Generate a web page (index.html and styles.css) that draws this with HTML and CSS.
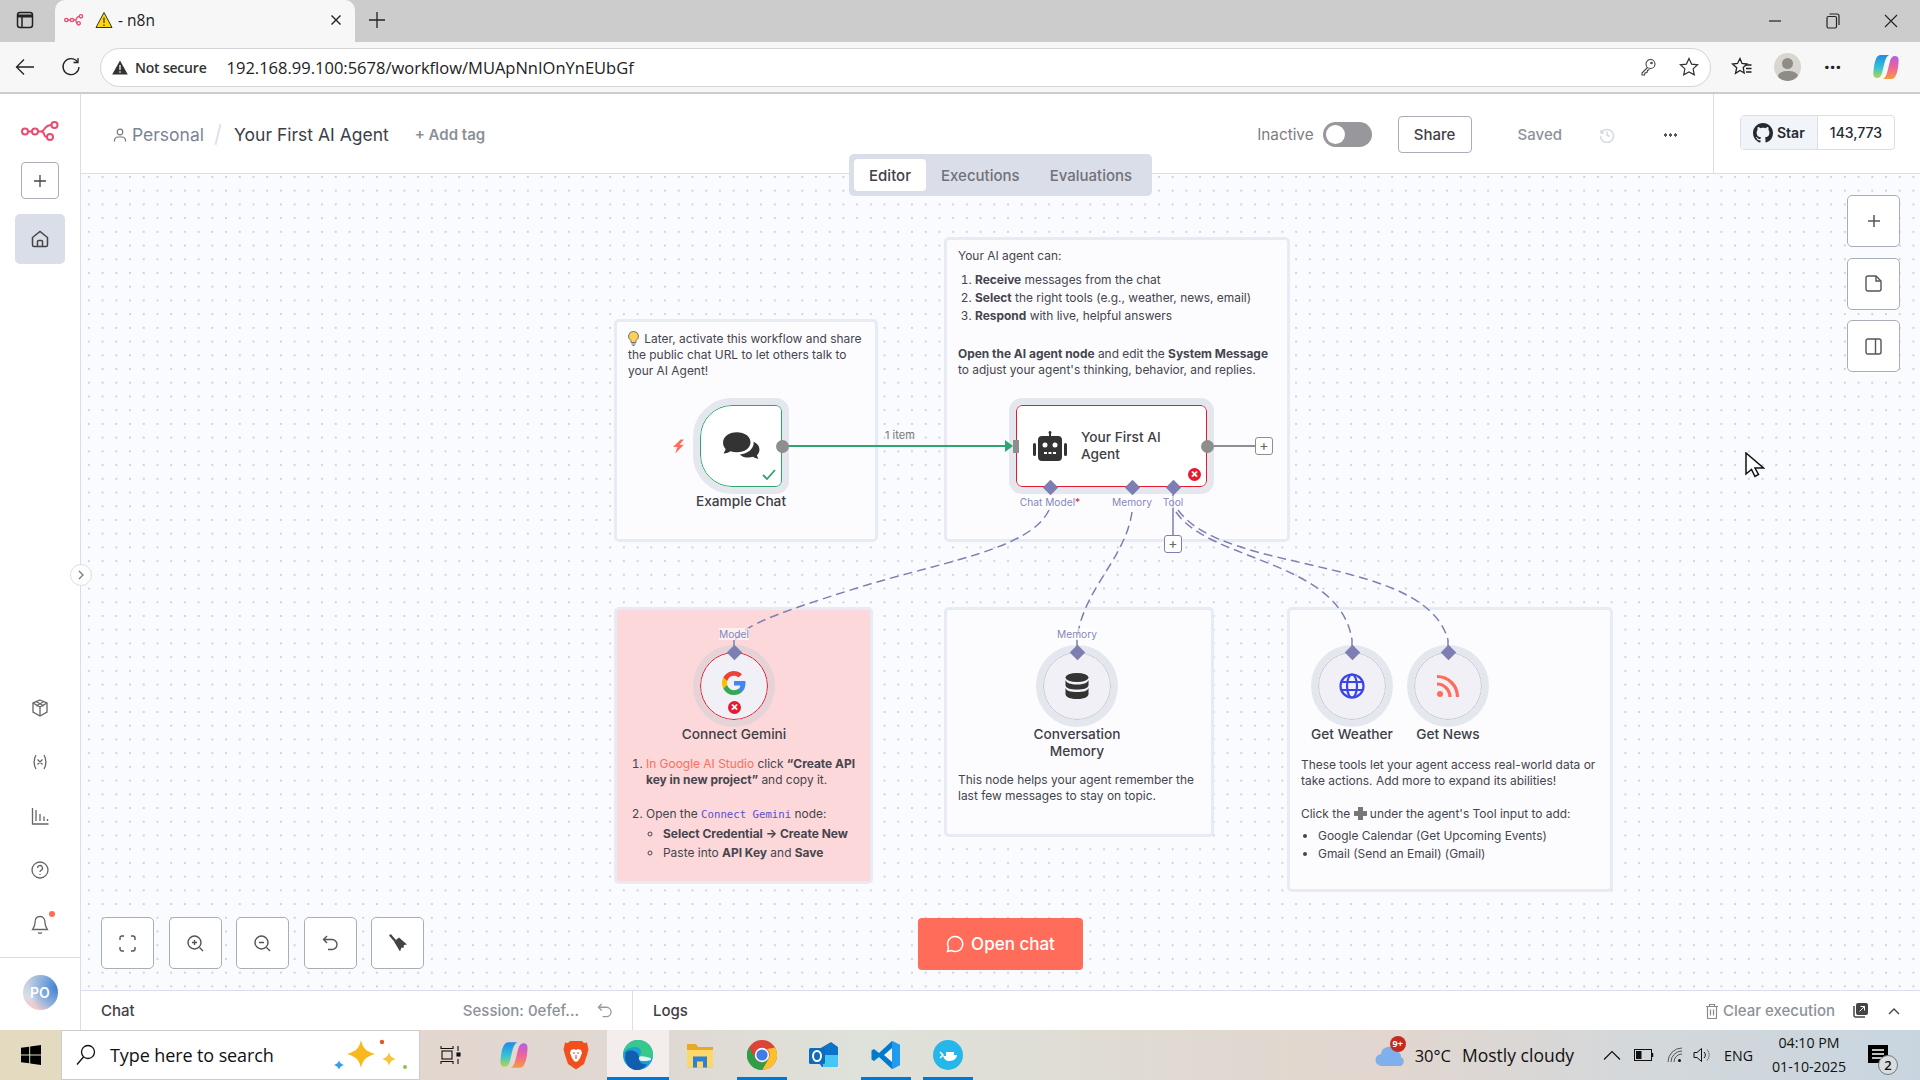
FILE: index.html
```html
<!DOCTYPE html>
<html lang="en">

<head>
    <meta charset="UTF-8">
    <meta name="viewport" content="width=device-width, initial-scale=1.0">
    <title>- n8n</title>
    <link rel="stylesheet" href="styles.css">
</head>

<body>
    <!-- Browser tab strip -->
    <div class="tabstrip">
        <div class="tab-side">
            <svg width="20" height="20" viewBox="0 0 20 20" fill="none" stroke="#222" stroke-width="1.5"><rect x="2.5" y="2.5" width="15" height="15" rx="2.5"/><path d="M2.5 6h15" stroke-width="3"/><path d="M7 7v10"/></svg>
        </div>
        <div class="tab">
            <svg class="tab-logo" width="20" height="12" viewBox="0 0 30 18" fill="none" stroke="#ea4b71" stroke-width="2"><circle cx="3.5" cy="9" r="2.5"/><circle cx="12" cy="9" r="2.5"/><circle cx="25.5" cy="3.5" r="2.5"/><circle cx="22" cy="14" r="2.5"/><path d="M6 9h3.5M14.5 9h2c3 0 2-5.5 6-5.5M16.5 9c3 0 1 5 3 5"/></svg>
            <svg width="18" height="18" viewBox="0 0 18 18"><path d="M9 1.5 17 16.5H1z" fill="#ffd60a" stroke="#333" stroke-width="1"/><path d="M9 6.5v5.5M9 13.5v1.5" stroke="#333" stroke-width="1.2"/></svg>
            <span class="tab-title">- n8n</span>
            <svg class="tab-close" width="12" height="12" viewBox="0 0 12 12" stroke="#222" stroke-width="1.4"><path d="M1.5 1.5l9 9M10.5 1.5l-9 9"/></svg>
        </div>
        <svg class="tab-new" width="18" height="18" viewBox="0 0 18 18" stroke="#222" stroke-width="1.3"><path d="M9 1v16M1 9h16"/></svg>
        <div class="window-btns">
            <svg width="14" height="14" viewBox="0 0 14 14" stroke="#222" stroke-width="1.2"><path d="M1 7h12"/></svg>
            <svg width="14" height="16" viewBox="0 0 14 16" fill="none" stroke="#222" stroke-width="1.2"><rect x="1" y="3.5" width="9.5" height="11.5" rx="1.5"/><path d="M3.5 1h7.5a2 2 0 0 1 2 2v9"/></svg>
            <svg width="14" height="14" viewBox="0 0 14 14" stroke="#222" stroke-width="1.1"><path d="M1 1l12 12M13 1L1 13"/></svg>
        </div>
    </div>

    <!-- Browser toolbar -->
    <div class="toolbar">
        <svg class="tool-back" width="20" height="18" viewBox="0 0 20 18" fill="none" stroke="#222" stroke-width="1.3"><path d="M19 9H1.5M9 1.5 1.5 9 9 16.5"/></svg>
        <svg class="tool-reload" width="20" height="20" viewBox="0 0 20 20" fill="none" stroke="#222" stroke-width="1.3"><path d="M16.5 5A8 8 0 1 0 18 10"/><path d="M17 1v4.5h-4.5"/></svg>
        <div class="urlbar">
            <svg width="16" height="15" viewBox="0 0 16 15"><path d="M8 .5 15.8 14.5H.2z" fill="#333"/><path d="M8 5v5M8 11.2v1.5" stroke="#fff" stroke-width="1.3"/></svg>
            <span class="not-secure">Not secure</span>
            <span class="url">192.168.99.100:5678/workflow/MUApNnIOnYnEUbGf</span>
            <svg class="url-key" width="18" height="18" viewBox="0 0 18 18" fill="none" stroke="#444" stroke-width="1.1"><circle cx="11.5" cy="6" r="4.5"/><path d="M8.5 9.5 3 15v2h2.5l.5-2 2-.5.5-2 2-1"/><circle cx="12.5" cy="5" r=".8"/></svg>
            <svg class="url-star" width="20" height="20" viewBox="0 0 20 20" fill="none" stroke="#333" stroke-width="1.2"><path d="M10 1.5l2.6 5.6 6 .7-4.5 4.1 1.2 6L10 15l-5.3 2.9 1.2-6L1.4 7.8l6-.7z"/></svg>
        </div>
        <div class="tool-right">
            <svg width="22" height="20" viewBox="0 0 22 20" fill="none" stroke="#222" stroke-width="1.3"><path d="M9 1.5l2 5 5 .5-3.8 3.5 1 5.5L9 13.5l-4.5 2.8 1.2-5.5L1.5 7l5-.5z"/><path d="M14.5 8h6M15 11.5h5.5M15 15h5.5"/></svg>
            <div class="profile"><span class="profile-head"></span><span class="profile-body"></span></div>
            <span class="tool-dots">···</span>
            <svg width="28" height="28" viewBox="0 0 28 28" fill="none">
                <defs>
                    <linearGradient id="copilotA" x1="0" y1="0" x2="0" y2="1"><stop offset="0" stop-color="#1f8be8"/><stop offset=".55" stop-color="#35c3d8"/><stop offset="1" stop-color="#b4d64a"/></linearGradient>
                    <linearGradient id="copilotB" x1="0" y1="0" x2="0" y2="1"><stop offset="0" stop-color="#b45fe0"/><stop offset=".5" stop-color="#f0649a"/><stop offset="1" stop-color="#f79a3e"/></linearGradient>
                </defs>
                <path d="M9 2h8c-2 1-3 3-4 6l-3 12c-.7 3-2.5 5-5 5-3.5 0-4-3-3.5-7 .5-5 1-9 2.5-12C5 3.5 6.5 2 9 2z" fill="url(#copilotA)"/>
                <path d="M19 26h-8c2-1 3-3 4-6l3-12c.7-3 2.5-5 5-5 3.5 0 4 3 3.5 7-.5 5-1 9-2.5 12-1 2.5-2.5 4-5 4z" fill="url(#copilotB)"/>
            </svg>
        </div>
    </div>

    <div class="app">
        <!-- n8n side menu -->
        <aside class="sidebar">
            <svg class="side-logo" width="38" height="20" viewBox="0 0 38 20" fill="none" stroke="#ea4b71" stroke-width="2"><circle cx="4" cy="10.5" r="3"/><circle cx="14" cy="10.5" r="3"/><circle cx="33.5" cy="4" r="3"/><circle cx="29" cy="16" r="3"/><path d="M7 10.5h4M17 10.5h3c4 0 3-6.5 10.500-6.500M20 10.500c5 0 1.500 5.500 6 5.500"/></svg>
            <div class="side-add"><svg width="14" height="14" viewBox="0 0 14 14" stroke="#444" stroke-width="1.3"><path d="M7 1v12M1 7h12"/></svg></div>
            <div class="side-home"><svg width="18" height="18" viewBox="0 0 18 18" fill="none" stroke="#444" stroke-width="1.5"><path d="M1.5 7.5 9 1.5l7.5 6v7.5a1.5 1.5 0 0 1-1.5 1.5H3A1.5 1.5 0 0 1 1.5 15z"/><path d="M6.5 16.5v-5a1 1 0 0 1 1-1h3a1 1 0 0 1 1 1v5"/></svg></div>
            <div class="side-icons">
                <svg width="18" height="18" viewBox="0 0 18 18" fill="none" stroke="#666" stroke-width="1.3"><path d="M9 1l7 3v9l-7 4-7-4V4z"/><path d="M2 4l7 4 7-4M9 8v9M5 2.5l8 4.5M13 2.5 5 7"/></svg>
                <svg width="18" height="18" viewBox="0 0 18 18" fill="none" stroke="#666" stroke-width="1.3"><path d="M5 2C2.5 6 2.5 12 5 16M13 2c2.500 4 2.500 10 0 14M6.5 6.5l5 5M11.5 6.5l-5 5"/></svg>
                <svg width="18" height="18" viewBox="0 0 18 18" fill="none" stroke="#666" stroke-width="1.3"><path d="M1.5 1v16h16M5 14V3M9 14V7M13 14v-4.5M16.5 14v-2"/></svg>
                <svg width="18" height="18" viewBox="0 0 18 18" fill="none" stroke="#666" stroke-width="1.3"><circle cx="9" cy="9" r="8"/><path d="M6.5 7a2.5 2.5 0 1 1 3.5 2.300c-.7.4-1 .8-1 1.700M9 13v1"/></svg>
                <div class="side-bell"><svg width="18" height="20" viewBox="0 0 18 20" fill="none" stroke="#666" stroke-width="1.3"><path d="M9 1.5c-3.5 0-5 3-5 6 0 4-2 6-2.500 7h15C16 13.500 14 11.500 14 7.500c0-3-1.500-6-5-6zM7 17.500c.5 1 3.500 1 4 0"/></svg><span class="bell-dot"></span></div>
            </div>
            <div class="side-user"><span class="avatar">PO</span></div>
        </aside>

        <main class="main">
            <header class="topbar">
                <svg width="14" height="14" viewBox="0 0 14 14" fill="none" stroke="#777" stroke-width="1.2"><circle cx="7" cy="4" r="2.8"/><path d="M1.5 13.5V12A3.500 3.500 0 0 1 5 9h4a3.500 3.500 0 0 1 3.500 3v1.500"/></svg>
                <span class="crumb">Personal</span>
                <span class="crumb-sep"></span>
                <span class="wf-name">Your First AI Agent</span>
                <span class="add-tag">+ Add tag</span>
                <span class="inactive">Inactive</span>
                <span class="toggle"><span class="knob"></span></span>
                <span class="share">Share</span>
                <span class="saved">Saved</span>
                <svg class="history" width="16" height="16" viewBox="0 0 16 16" fill="none" stroke="#d5dae3" stroke-width="1.5"><path d="M2 3v3h3M2.2 6A6.500 6.500 0 1 1 1.500 9M8 4.500V8l2.500 1.500"/></svg>
                <span class="more"></span>
                <span class="top-div"></span>
                <div class="github">
                    <span class="gh-star"><svg width="20" height="20" viewBox="0 0 16 16" fill="#24292f"><path d="M8 0C3.58 0 0 3.58 0 8c0 3.54 2.29 6.53 5.47 7.59.4.07.55-.17.55-.38 0-.19-.01-.82-.01-1.49-2.01.37-2.53-.49-2.69-.94-.09-.23-.48-.94-.82-1.13-.28-.15-.68-.52-.01-.53.63-.01 1.08.58 1.23.82.72 1.21 1.87.87 2.33.66.07-.52.28-.87.51-1.07-1.78-.2-3.64-.89-3.64-3.95 0-.87.31-1.59.82-2.15-.08-.2-.36-1.02.08-2.12 0 0 .67-.21 2.2.82.64-.18 1.32-.27 2-.27s1.36.09 2 .27c1.53-1.04 2.2-.82 2.2-.82.44 1.1.16 1.92.08 2.12.51.56.82 1.27.82 2.15 0 3.07-1.87 3.75-3.65 3.95.29.25.54.73.54 1.48 0 1.07-.01 1.93-.01 2.2 0 .21.15.46.55.38A8.01 8.01 0 0 0 16 8c0-4.42-3.58-8-8-8z"/></svg>Star</span>
                    <span class="gh-count">143,773</span>
                </div>
            </header>

            <section class="canvas">
                <div class="tabs">
                    <span class="tabs-item tabs-active">Editor</span>
                    <span class="tabs-item">Executions</span>
                    <span class="tabs-item tabs-last">Evaluations</span>
                </div>

                <!-- Sticky notes: place on the canvas is the content -->
                <div class="note note-chat">
                    <p><svg class="bulb" width="11" height="15" viewBox="0 0 11 15"><path d="M5.5.5A4.8 4.8 0 0 0 3 9.5v2h5v-2A4.8 4.8 0 0 0 5.5.5z" fill="#ffcf5c" stroke="#555" stroke-width=".8"/><path d="M3.5 13h4M4.5 14.5h2" stroke="#666"/></svg> Later, activate this workflow and share the public chat URL to let others talk to your AI Agent!</p>
                </div>
                <div class="note note-agent">
                    <p>Your AI agent can:</p>
                    <ol class="agent-list">
                        <li><b>Receive</b> messages from the chat</li>
                        <li><b>Select</b> the right tools (e.g., weather, news, email)</li>
                        <li><b>Respond</b> with live, helpful answers</li>
                    </ol>
                    <p class="agent-open"><b>Open the AI agent node</b> and edit the <b>System Message</b> to adjust your agent's thinking, behavior, and replies.</p>
                </div>
                <div class="note note-gemini">
                    <ol class="gemini-list">
                        <li><span class="link-red">In Google AI Studio</span> click <b>“Create API</b><br><b>key in new project”</b> and copy it.</li>
                        <li class="gemini-second">Open the <code>Connect Gemini</code> node:
                            <ul>
                                <li><b>Select Credential → Create New</b></li>
                                <li>Paste into <b>API Key</b> and <b>Save</b></li>
                            </ul>
                        </li>
                    </ol>
                </div>
                <div class="note note-memory">
                    <p>This node helps your agent remember the last few messages to stay on topic.</p>
                </div>
                <div class="note note-tools">
                    <p>These tools let your agent access real-world data or take actions. Add more to expand its abilities!</p>
                    <p class="tools-click">Click the <span class="plus-emoji"></span> under the agent's Tool input to add:</p>
                    <ul class="tools-list">
                        <li>Google Calendar (Get Upcoming Events)</li>
                        <li>Gmail (Send an Email) (Gmail)</li>
                    </ul>
                </div>

                <!-- Connections, viewBox is page coordinates -->
                <svg class="edges" viewBox="80 174 1840 816" width="1840" height="816" fill="none">
                    <path d="M788 446H1006" stroke="#2da56d" stroke-width="2"/>
                    <path d="M1005 440l8 6-8 6z" fill="#2da56d"/>
                    <path d="M1214 446h41" stroke="#8e8e8e" stroke-width="2"/>
                    <path d="M1173 490v45" stroke="#7d7fb3" stroke-width="1.5"/>
                    <g stroke="#7d7fb3" stroke-width="1.5" stroke-dasharray="9 5">
                        <path d="M1049 510C1030 550 940 562 857 588S745 625 735 640"/>
                        <path d="M1132 512C1125 560 1082 590 1077 640"/>
                        <path d="M1176 512C1210 562 1340 560 1352 640"/>
                        <path d="M1178 510C1225 575 1425 555 1448 640"/>
                    </g>
                    <path d="M734 640v12M1077 640v12M1352 640v12M1448 640v12" stroke="#7d7fb3" stroke-width="1.5"/>
                </svg>

                <!-- Nodes -->
                <span class="edge-label">1 item</span>

                <div class="node-chat">
                    <svg width="38" height="30" viewBox="0 0 36 28"><path d="M14 1C6.5 1 1 5 1 11c0 2.5 1 4.5 2.5 6L1.5 21c3 0 5-1 6.5-2 2 .7 4 1 6 1 7.5 0 13-4 13-9.5S21.500 1 14 1z" fill="#333"/><path d="M30 10c.5 7-6 11.5-13 12 2 2 5 3 8 3 1.5 0 3-.2 4.5-.7 1 .8 3 1.7 5 1.7l-1.5-3c1.5-1.5 2.5-3.5 2.5-5.5 0-3.5-2-6-5.500-7.500z" fill="#333"/></svg>
                    <svg class="chat-check" width="14" height="12" viewBox="0 0 14 12" fill="none" stroke="#2da56d" stroke-width="1.8"><path d="M1 6l4 4 8-9"/></svg>
                </div>
                <svg class="bolt" width="12" height="15" viewBox="0 0 11 13"><path d="M7 0 0 7h4l-2 6 8-8H6l4-5z" fill="#ff6d5a"/></svg>
                <span class="port-out port-chat"></span>
                <span class="node-title title-chat">Example Chat</span>

                <div class="node-agent">
                    <svg width="36" height="30" viewBox="0 0 36 30"><path d="M18 0a1.5 1.5 0 0 1 1 2.6V5h7a4 4 0 0 1 4 4v17a4 4 0 0 1-4 4H10a4 4 0 0 1-4-4V9a4 4 0 0 1 4-4h7V2.6A1.5 1.5 0 0 1 18 0z" fill="#333"/><rect x="1" y="12" width="3" height="13" rx="1.5" fill="#333"/><rect x="32" y="12" width="3" height="13" rx="1.5" fill="#333"/><circle cx="13" cy="14" r="2.5" fill="#fff"/><circle cx="23" cy="14" r="2.5" fill="#fff"/><path d="M12 22h3M16.5 22h3M21 22h3" stroke="#fff" stroke-width="1.8"/></svg>
                    <span class="agent-name">Your First AI Agent</span>
                    <span class="err-badge err-agent">×</span>
                </div>
                <span class="port-in"></span>
                <span class="port-out port-agent"></span>
                <span class="plus-box plus-out">+</span>
                <span class="plus-box plus-tool">+</span>
                <span class="diamond d-model"></span>
                <span class="diamond d-mem"></span>
                <span class="diamond d-tool"></span>
                <span class="port-label pl-model">Chat Model<i>*</i></span>
                <span class="port-label pl-mem">Memory</span>
                <span class="port-label pl-tool">Tool</span>

                <div class="node-round n-gemini">
                    <svg width="24" height="24" viewBox="0 0 24 24"><path d="M23.5 12.3c0-.8-.1-1.600-.2-2.300H12v4.500h6.500a5.500 5.500 0 0 1-2.400 3.600v3h3.900c2.200-2.100 3.500-5.200 3.500-8.800z" fill="#4285f4"/><path d="M12 24c3.2 0 6-1.100 8-2.900l-3.900-3c-1.100.7-2.500 1.200-4.100 1.200-3.100 0-5.800-2.100-6.700-5H1.300v3.100A12 12 0 0 0 12 24z" fill="#34a853"/><path d="M5.300 14.300a7.200 7.200 0 0 1 0-4.600V6.600h-4a12 12 0 0 0 0 10.800z" fill="#fbbc05"/><path d="M12 4.800c1.800 0 3.300.6 4.600 1.800l3.400-3.400A12 12 0 0 0 1.300 6.600l4 3.100c1-2.900 3.600-4.900 6.700-4.900z" fill="#ea4335"/></svg>
                    <span class="err-badge err-gemini">×</span>
                </div>
                <div class="node-round n-memory">
                    <svg width="24" height="26" viewBox="0 0 24 26" fill="#333"><ellipse cx="12" cy="4.5" rx="11.5" ry="4.5"/><path d="M.5 7c1 3 5 4.5 11.5 4.5S22.5 10 23.5 7v5.5c-1 3-5 4-11.5 4S1.5 15.5.5 12.5z"/><path d="M.5 15c1 3 5 4 11.5 4s10.5-1 11.5-4v6.5C22.5 24.5 18.5 26 12 26S1.5 24.5.5 21.5z"/></svg>
                </div>
                <div class="node-round n-weather">
                    <svg width="26" height="26" viewBox="0 0 26 26" fill="none" stroke="#3a45e8" stroke-width="2.2"><circle cx="13" cy="13" r="11.5"/><ellipse cx="13" cy="13" rx="5" ry="11.5"/><path d="M2.5 9h21M2.5 17h21"/></svg>
                </div>
                <div class="node-round n-news">
                    <svg width="24" height="24" viewBox="0 0 24 24" fill="none" stroke="#ff6d5a" stroke-width="3.2"><circle cx="4" cy="20" r="3" fill="#ff6d5a" stroke="none"/><path d="M1 10a13 13 0 0 1 13 13M1 2.5A20.5 20.5 0 0 1 21.5 23"/></svg>
                </div>
                <span class="diamond d-gem"></span>
                <span class="diamond d-cmem"></span>
                <span class="diamond d-weather"></span>
                <span class="diamond d-news"></span>
                <span class="port-label pl-gem">Model</span>
                <span class="port-label pl-cmem">Memory</span>
                <span class="node-title title-gem">Connect Gemini</span>
                <span class="node-title title-cmem">Conversation Memory</span>
                <span class="node-title title-weather">Get Weather</span>
                <span class="node-title title-news">Get News</span>

                <span class="collapse"><svg width="8" height="10" viewBox="0 0 8 10" fill="none" stroke="#777" stroke-width="1.3"><path d="M2 1l4 4-4 4"/></svg></span>

                <!-- Floating canvas controls -->
                <div class="ctrl-right">
                    <span class="ctrl"><svg width="14" height="14" viewBox="0 0 14 14" stroke="#555" stroke-width="1.5"><path d="M7 1v12M1 7h12"/></svg></span>
                    <span class="ctrl"><svg width="17" height="17" viewBox="0 0 17 17" fill="none" stroke="#555" stroke-width="1.4"><path d="M3 1h8l5 5v8a2 2 0 0 1-2 2H3a2 2 0 0 1-2-2V3a2 2 0 0 1 2-2z"/><path d="M11 1v5h5"/></svg></span>
                    <span class="ctrl"><svg width="17" height="17" viewBox="0 0 17 17" fill="none" stroke="#555" stroke-width="1.4"><rect x="1" y="1" width="15" height="15" rx="2"/><path d="M10.5 1v15"/></svg></span>
                </div>
                <div class="ctrl-left">
                    <span class="ctrl"><svg width="17" height="17" viewBox="0 0 17 17" fill="none" stroke="#555" stroke-width="1.4"><path d="M1 5V3a2 2 0 0 1 2-2h2M12 1h2a2 2 0 0 1 2 2v2M16 12v2a2 2 0 0 1-2 2h-2M5 16H3a2 2 0 0 1-2-2v-2"/></svg></span>
                    <span class="ctrl"><svg width="17" height="17" viewBox="0 0 17 17" fill="none" stroke="#555" stroke-width="1.4"><circle cx="7.5" cy="7.5" r="6.5"/><path d="M12.5 12.5 16 16M7.5 5v5M5 7.5h5"/></svg></span>
                    <span class="ctrl"><svg width="17" height="17" viewBox="0 0 17 17" fill="none" stroke="#555" stroke-width="1.4"><circle cx="7.5" cy="7.5" r="6.5"/><path d="M12.5 12.5 16 16M5 7.5h5"/></svg></span>
                    <span class="ctrl"><svg width="16" height="16" viewBox="0 0 16 16" fill="none" stroke="#555" stroke-width="1.4"><path d="M5 1 1.5 4.5 5 8M1.5 4.5H10a5 5 0 0 1 0 10H6"/></svg></span>
                    <span class="ctrl"><svg width="20" height="20" viewBox="0 0 20 20" fill="#444"><path d="M1 2.5 2.8 1 8 7 6.200 8.500z"/><path d="M6 8.500 11 4.500l8 7-3 .5-.5 3-2-.5-1.500 4z"/></svg></span>
                </div>
                <button class="open-chat"><svg width="18" height="18" viewBox="0 0 18 18" fill="none" stroke="#fff" stroke-width="1.5"><path d="M9 1.5a7.5 7.5 0 1 1-3.500 14L1.500 16.500l1-4A7.500 7.500 0 0 1 9 1.500z"/></svg>Open chat</button>

                <svg class="cursor" width="20" height="28" viewBox="0 0 20 28"><path d="M1 1v21l5.500-4.500 3.500 7 3.500-2-3.500-6.500h8.500z" fill="#fff" stroke="#111" stroke-width="1.5"/></svg>
            </section>

            <footer class="panel">
                <div class="panel-chat">
                    <span class="panel-title">Chat</span>
                    <span class="session">Session: 0efef...</span>
                    <svg width="15" height="15" viewBox="0 0 16 16" fill="none" stroke="#999" stroke-width="1.4"><path d="M5 1 1.5 4.5 5 8M1.5 4.5H10a5 5 0 0 1 0 10H6"/></svg>
                </div>
                <div class="panel-logs">
                    <span class="panel-title">Logs</span>
                    <span class="clear"><svg width="14" height="16" viewBox="0 0 14 16" fill="none" stroke="#888" stroke-width="1.2"><path d="M1 3.5h12M4.5 3.5v-2h5v2M2.500 3.500v11a1 1 0 0 0 1 1h7a1 1 0 0 0 1-1v-11M5.500 6.500v6M8.500 6.500v6"/></svg>Clear execution</span>
                    <svg class="pop" width="15" height="15" viewBox="0 0 15 15"><rect x="3" y="0" width="12" height="12" rx="2" fill="#444"/><path d="M1 3v9.5A1.5 1.5 0 0 0 2.5 14H12" fill="none" stroke="#444" stroke-width="1.5"/><path d="M6.5 8.5l5-5M7.500 3.500h4v4" fill="none" stroke="#fff" stroke-width="1"/></svg>
                    <svg width="12" height="8" viewBox="0 0 12 8" fill="none" stroke="#444" stroke-width="1.4"><path d="M1 7l5-5 5 5"/></svg>
                </div>
            </footer>
        </main>
    </div>

    <!-- Windows taskbar -->
    <div class="taskbar">
        <div class="start"><svg width="20" height="20" viewBox="0 0 20 20" fill="#000"><path d="M0 2.8 8.2 1.7v7.8H0zM9.2 1.5 20 0v9.5H9.2zM0 10.5h8.2v7.8L0 17.2zM9.2 10.5H20V20L9.2 18.5z"/></svg></div>
        <div class="search">
            <svg width="20" height="22" viewBox="0 0 20 22" fill="none" stroke="#111" stroke-width="1.3"><circle cx="12" cy="8" r="6.5"/><path d="M7.5 13 1 20.5"/></svg>
            <span class="search-text">Type here to search</span>
            <svg class="search-spark" width="76" height="36" viewBox="0 0 76 36"><path d="M28 3c2 9 5 11 14 14-9 3-12 5-14 14-2-9-5-11-14-14 9-3 12-5 14-14z" fill="#f9b81c"/><path d="M56 15c1 4 2 5.5 7 7-5 1.5-6 3-7 7-1-4-2-5.5-7-7 5-1.5 6-3 7-7z" fill="#f9c334"/><circle cx="49" cy="5" r="2.2" fill="#e8542a"/><circle cx="72" cy="30" r="2" fill="#8cc63f"/><path d="M6 23c.5 2.5 1.5 3.5 5 5-3.5 1.5-4.5 2.5-5 5-.5-2.5-1.5-3.5-5-5 3.5-1.5 4.5-2.5 5-5z" fill="#2f9ff0"/></svg>
        </div>
        <div class="task-apps">
            <span class="app-cell app-task"><svg width="22" height="20" viewBox="0 0 22 20" fill="none" stroke="#111" stroke-width="1.1"><path d="M1 1v2.5h12V1M1 19v-2.5h12V19"/><rect x="2" y="6" width="10" height="8"/><path d="M18 1v5M18 14v5"/><rect x="17" y="8" width="3" height="3" fill="#111"/></svg></span>
            <span class="app-cell"><svg width="30" height="30" viewBox="0 0 28 28"><path d="M9 2h8c-2 1-3 3-4 6l-3 12c-.7 3-2.5 5-5 5-3.5 0-4-3-3.5-7 .5-5 1-9 2.5-12C5 3.5 6.5 2 9 2z" fill="url(#copilotA)"/><path d="M19 26h-8c2-1 3-3 4-6l3-12c.7-3 2.5-5 5-5 3.5 0 4 3 3.5 7-.5 5-1 9-2.5 12-1 2.5-2.5 4-5 4z" fill="url(#copilotB)"/></svg></span>
            <span class="app-cell"><svg width="26" height="30" viewBox="0 0 26 30"><path d="M7 1h12l2 2 3-.5 1.5 7L24 15l-3 9-8 5.5L5 24l-3-9L.5 9.5 2 2.5 5 3z" fill="#f1501e"/><path d="M8 10l3-1 2 1 2-1 3 1 1 3-2 5-2 3-2 1-2-1-2-3-2-5z" fill="#fff"/><path d="M10 13h2M14 13h2M13 15v4" stroke="#f1501e" stroke-width="1.2"/></svg></span>
            <span class="app-cell app-on app-active"><svg width="30" height="30" viewBox="0 0 30 30"><circle cx="15" cy="15" r="15" fill="#1a9fd8"/><path d="M0 15C0 7 7 0 15 0c8 0 15 6 15 14 0 4-3 6-6 6h-6c-2 0-3-1-3-2 0-2 3-2 3-6 0-3-3-5-6-5-6 0-12 4-12 8z" fill="#37c98c"/><path d="M3 12c3-3 13-2 13 6 0 5 4 7 8 6-3 4-6 6-10 6C6 30 0 22 3 12z" fill="#0f5fae"/><path d="M16 18c0-2 3-2 8-1s4 2 4 3c-2 1-7 1-9 1-2 0-3-1-3-3z" fill="#e9f2f2"/></svg></span>
            <span class="app-cell"><svg width="28" height="26" viewBox="0 0 28 26"><path d="M1 2h9l2 3h15v19a1.5 1.5 0 0 1-1.5 1.5h-23A1.5 1.5 0 0 1 1 24z" fill="#e8a728"/><path d="M1 8h26v16a1.5 1.5 0 0 1-1.5 1.5h-23A1.5 1.5 0 0 1 1 24z" fill="#fcd769"/><path d="M7 25.5v-11h14v11h-4v-6h-6v6z" fill="#2f7fd4"/></svg></span>
            <span class="app-cell app-on"><svg width="30" height="30" viewBox="0 0 30 30"><circle cx="15" cy="15" r="15" fill="#db4437"/><path d="M28 7.5A15 15 0 0 1 15 30l6.5-11.2A7.5 7.5 0 0 0 20 9z" fill="#fbc02d"/><path d="M2 7.5A15 15 0 0 0 15 30l6.5-11.500-6.500 4a7.500 7.500 0 0 1-7-5z" fill="#2e9e49"/><circle cx="15" cy="15" r="7.2" fill="#fff"/><circle cx="15" cy="15" r="5.6" fill="#3f7bea"/></svg></span>
            <span class="app-cell"><svg width="30" height="28" viewBox="0 0 30 28"><path d="M10 8l12-7 7 5v17a3 3 0 0 1-3 3H13l-3-4z" fill="#0b74c8"/><path d="M14 14h15v9a3 3 0 0 1-3 3H14z" fill="#45c6f5"/><rect x="0" y="7" width="16" height="16" rx="1.5" fill="#0f6cbd"/><ellipse cx="8" cy="15" rx="4" ry="5" fill="none" stroke="#fff" stroke-width="2"/></svg></span>
            <span class="app-cell app-on"><svg width="30" height="30" viewBox="0 0 30 30"><path d="M21 1l8 4v20l-8 4L8 17l-5 4-2.500-1.500V10.500L3 9l5 4z" fill="#007acc"/><path d="M21 1l8 4v20l-8 4z" fill="#1f9cf0"/><path d="M21 8l-8 7 8 7z" fill="#f3f0ec"/></svg></span>
            <span class="app-cell app-on"><svg width="30" height="30" viewBox="0 0 30 30"><ellipse cx="15" cy="15" rx="15" ry="15" fill="#25b7ea"/><path d="M13 12h8v3h3c0 3-3 6-8 6-3 0-5-2-6-5h3z" fill="#fff"/><path d="M7 12l3 3-3 3" fill="none" stroke="#fff" stroke-width="1.5"/></svg></span>
        </div>
        <div class="tray">
            <span class="weather-icon"><svg width="32" height="24" viewBox="0 0 32 24"><path d="M7 23a6 6 0 0 1-1-12A8 8 0 0 1 21 8a6 6 0 0 1 5 6 5 5 0 0 1 0 9z" fill="#7fb0ec"/></svg><span class="weather-badge">9+</span></span>
            <span class="temp">30°C</span>
            <span class="cond">Mostly cloudy</span>
            <svg class="tray-chev" width="18" height="10" viewBox="0 0 18 10" fill="none" stroke="#111" stroke-width="1.2"><path d="M1 9.5 9 1.5l8 8"/></svg>
            <svg class="tray-batt" width="20" height="12" viewBox="0 0 20 12" fill="none" stroke="#111"><rect x=".5" y=".5" width="17" height="11"/><rect x="2" y="2" width="5.5" height="8" fill="#111" stroke="none"/><path d="M18.5 4v4" stroke-width="1.5"/></svg>
            <svg class="tray-wifi" width="16" height="16" viewBox="0 0 16 16" fill="none" stroke="#555" stroke-width="1"><path d="M1 15A14 14 0 0 1 15 1M4 15A11 11 0 0 1 15 4M7 15a8 8 0 0 1 8-8"/><circle cx="12.5" cy="13.5" r="1.5" fill="#111" stroke="none"/></svg>
            <svg class="tray-vol" width="20" height="16" viewBox="0 0 20 16" fill="none" stroke="#111" stroke-width="1"><path d="M1 5.5h3L8.5 1.5v13L4 10.5H1zM11 5a4 4 0 0 1 0 6"/><path d="M14 2.5a8 8 0 0 1 0 11" stroke="#777"/></svg>
            <span class="lang">ENG</span>
            <span class="clock"><span>04:10 PM</span><span>01-10-2025</span></span>
            <span class="notif"><svg width="20" height="20" viewBox="0 0 20 20"><path d="M0 0h20v18H0z" fill="#000"/><path d="M4 5h12M4 9h12M4 13h12" stroke="#fff" stroke-width="1.3"/></svg><span class="notif-count">2</span></span>
        </div>
    </div>
</body>

</html>
```

FILE: styles.css
```css
* {
    box-sizing: border-box;
}

body {
    margin: 0;
    width: 1920px;
    height: 1080px;
    overflow: hidden;
    font-family: 'Inter', sans-serif;
    color: #3f3f46;
    background-color: #fff;
}

p,
ol,
ul {
    margin: 0;
    padding: 0;
}

svg {
    display: block;
    flex-shrink: 0;
}

/* Browser chrome */
.tabstrip {
    height: 42px;
    background-color: #cccccc;
    display: flex;
    align-items: center;
    position: relative;
}

.tab-side {
    width: 55px;
    display: flex;
    justify-content: center;
    padding-right: 6px;
    margin-bottom: 2px;
}

.tab {
    width: 300px;
    height: 42px;
    background-color: #f7f7f7;
    border-radius: 10px 10px 0 0;
    display: flex;
    align-items: center;
    padding: 0 13px 2px 9px;
    gap: 6px;
}

.tab-logo {
    margin-right: 5px;
}

.tab-title {
    font-family: 'Open Sans', sans-serif;
    font-size: 15.5px;
    color: #222;
    margin-left: -1px;
}

.tab-close {
    margin-left: auto;
}

.tab-new {
    margin-left: 13px;
    margin-bottom: 2px;
}

.window-btns {
    margin-left: auto;
    display: flex;
    align-items: center;
    gap: 44px;
    padding-right: 22px;
}

.toolbar {
    height: 52px;
    background-color: #f7f7f7;
    border-bottom: 2px solid #cccccc;
    display: flex;
    align-items: center;
    padding: 0 0 0 15px;
}

.tool-reload {
    margin-left: 26px;
}

.urlbar {
    margin-left: 19px;
    width: 1611px;
    height: 39px;
    background-color: #fff;
    border: 1px solid #d4d4d4;
    border-radius: 20px;
    display: flex;
    align-items: center;
    padding: 0 11px;
}

.not-secure {
    font-family: 'Open Sans', sans-serif;
    font-size: 14px;
    font-weight: 600;
    color: #333;
    margin-left: 7px;
    letter-spacing: -0.2px;
}

.url {
    font-family: 'Open Sans', sans-serif;
    font-size: 16.5px;
    color: #222;
    margin-left: 20px;
}

.url-key {
    margin-left: auto;
}

.url-star {
    margin-left: 22px;
}

.tool-right {
    display: flex;
    align-items: center;
    margin-left: 20px;
}

.profile {
    width: 27px;
    height: 28px;
    border-radius: 50%;
    background-color: #d8d6d1;
    margin-left: 21px;
    overflow: hidden;
    display: flex;
    flex-direction: column;
    align-items: center;
    padding-top: 5px;
}

.profile-head {
    width: 11px;
    height: 12px;
    border-radius: 50%;
    background-color: #8f8c85;
}

.profile-body {
    width: 20px;
    height: 12px;
    margin-top: 2px;
    border-radius: 50%;
    background-color: #8f8c85;
}

.tool-dots {
    font-family: 'Open Sans', sans-serif;
    font-size: 20px;
    font-weight: 700;
    color: #222;
    margin-left: 23px;
    margin-right: 31px;
    line-height: 1;
}

/* App frame */
.app {
    height: 936px;
    display: flex;
}

.sidebar {
    width: 81px;
    border-right: 1px solid #d9deea;
    display: flex;
    flex-direction: column;
    align-items: center;
}

.side-logo {
    margin-top: 27px;
}

.side-add {
    margin-top: 21px;
    width: 38px;
    height: 37px;
    border: 1px solid #a8adb8;
    border-radius: 4px;
    display: flex;
    align-items: center;
    justify-content: center;
}

.side-home {
    margin-top: 15px;
    width: 50px;
    height: 50px;
    border-radius: 5px;
    background-color: #dadee8;
    display: flex;
    align-items: center;
    justify-content: center;
}

.side-icons {
    margin-top: auto;
    display: flex;
    flex-direction: column;
    align-items: center;
    gap: 36px;
    padding-bottom: 22px;
}

.side-bell {
    position: relative;
}

.bell-dot {
    position: absolute;
    top: -4px;
    right: -6px;
    width: 6px;
    height: 6px;
    border-radius: 50%;
    background-color: #ff6d5a;
}

.side-user {
    width: 100%;
    height: 73px;
    border-top: 1px solid #d9deea;
    display: flex;
    justify-content: center;
    padding-top: 17px;
}

.avatar {
    width: 35px;
    height: 35px;
    border-radius: 50%;
    background:
        radial-gradient(circle at 100% 35%, #3a7fd5 0, #8fb3dc 45%, transparent 72%),
        linear-gradient(#b9c7dc, #d9dde6 60%, #f7c5c2);
    color: #fff;
    font-size: 14px;
    font-weight: 600;
    display: flex;
    align-items: center;
    justify-content: center;
}

.main {
    flex: 1;
    display: flex;
    flex-direction: column;
    min-width: 0;
}

/* Workflow header */
.topbar {
    height: 80px;
    flex-shrink: 0;
    display: flex;
    align-items: center;
    padding: 2px 25px 0 32px;
    position: relative;
    border-bottom: 1px solid #d9deea;
}

.crumb {
    margin-left: 5px;
    font-size: 17.5px;
    color: #7c8494;
}

.crumb-sep {
    width: 2px;
    height: 21px;
    background-color: #dde2ec;
    transform: rotate(14deg);
    margin: 0 15px 0 13px;
}

.wf-name {
    font-size: 17.5px;
    color: #3c3f48;
}

.add-tag {
    margin-left: 26px;
    font-size: 15px;
    font-weight: 600;
    color: #8b8f99;
}

.inactive {
    margin-left: auto;
    font-size: 15.3px;
    color: #7d7d82;
}

.toggle {
    margin-left: 9px;
    width: 49px;
    height: 25px;
    border-radius: 13px;
    background-color: #97979c;
    padding: 3px;
}

.knob {
    display: block;
    width: 19px;
    height: 19px;
    border-radius: 50%;
    background-color: #fff;
}

.share {
    margin-left: 26px;
    width: 74px;
    height: 37px;
    border: 1px solid #a8adb8;
    border-radius: 4px;
    font-size: 15px;
    font-weight: 500;
    display: flex;
    align-items: center;
    justify-content: center;
}

.saved {
    margin-left: 46px;
    font-size: 15px;
    font-weight: 500;
    color: #8d9199;
}

.history {
    margin-left: 37px;
}

.more {
    margin-left: 48px;
    width: 14px;
    height: 4px;
    background-image: radial-gradient(circle, #555 1.6px, transparent 1.8px);
    background-size: 5px 4px;
}

.top-div {
    width: 1px;
    height: 80px;
    margin-top: -2px;
    background-color: #d9deea;
    margin-left: 36px;
}

.github {
    margin-left: 26px;
    width: 155px;
    height: 35px;
    border: 1px solid #d9deea;
    border-radius: 4px;
    display: flex;
    font-size: 14px;
    font-weight: 500;
    color: #24292f;
    position: relative;
    top: -2px;
}

.gh-star {
    width: 77px;
    background-color: #f1f4f8;
    border-right: 1px solid #d9deea;
    display: flex;
    align-items: center;
    gap: 4px;
    padding-left: 12px;
    font-weight: 600;
}

.gh-count {
    flex: 1;
    display: flex;
    align-items: center;
    justify-content: center;
}

/* Canvas: notes and nodes sit at page offset minus (81, 174) */
.canvas {
    flex: 1;
    position: relative;
    background-color: #fafbfe;
    background-image: radial-gradient(circle, #d0d3da 0.7px, transparent 1px);
    background-size: 13.72px 13.72px;
    background-position: 1px -3.9px;
    overflow: visible;
}

.tabs {
    position: absolute;
    left: 768px;
    top: -20px;
    width: 303px;
    height: 42px;
    background-color: #dadee8;
    border-radius: 5px;
    display: flex;
    align-items: center;
    padding: 0 5px;
    font-size: 15px;
    font-weight: 500;
    color: #71717a;
    z-index: 3;
}

.tabs-item {
    padding: 0 13px;
    height: 32px;
    display: flex;
    align-items: center;
    border-radius: 4px;
}

.tabs-item + .tabs-item {
    margin-left: 2px;
}

.tabs-item.tabs-last {
    margin-left: 4px;
}

.tabs-active {
    width: 72px;
    justify-content: center;
    padding: 0;
    background-color: #fff;
    color: #3f3f46;
}

.note {
    position: absolute;
    background-color: #fcfcff;
    border: 3px solid #e6ebf4;
    border-radius: 5px;
    font-size: 11.95px;
    line-height: 16px;
    color: #45454d;
}

.note-chat {
    left: 533px;
    top: 145px;
    width: 264px;
    height: 223px;
    padding: 9px 7px 9px 11px;
}

.note-agent {
    left: 863px;
    top: 63px;
    width: 346px;
    height: 305px;
    padding: 8px 11px;
}

.note-gemini {
    left: 533px;
    top: 433px;
    width: 259px;
    height: 277px;
    padding: 146px 10px 0 14px;
    background-color: #fcd8da;
}

.note-memory {
    left: 863px;
    top: 433px;
    width: 270px;
    height: 230px;
    padding: 162px 11px 0;
}

.note-tools {
    left: 1206px;
    top: 433px;
    width: 326px;
    height: 285px;
    padding: 147px 8px 0 11px;
}

.bulb {
    display: inline-block;
    vertical-align: -3px;
    margin-right: 2px;
}

.agent-list {
    padding-left: 17px;
    margin-top: 7px;
    line-height: 18px;
}

.agent-open {
    margin-top: 21px;
}

.gemini-list {
    padding-left: 15px;
}

.gemini-second {
    margin-top: 18px;
}

.gemini-list ul {
    list-style-type: circle;
    padding-left: 17px;
}

.gemini-list ul li {
    margin-top: 3px;
}

.link-red {
    color: #ff6d5a;
}

code {
    font-family: 'DejaVu Sans Mono', monospace;
    font-size: 10.7px;
    color: #5b4ecf;
}

.tools-click {
    margin-top: 17px;
}

.plus-emoji {
    display: inline-block;
    width: 13px;
    height: 13px;
    vertical-align: -2px;
    background:
        linear-gradient(#777, #777) center / 13px 5px no-repeat,
        linear-gradient(#777, #777) center / 5px 13px no-repeat;
}

.tools-list {
    padding-left: 17px;
    margin-top: 5px;
    line-height: 18px;
}

.edges {
    position: absolute;
    left: -1px;
    top: 0;
    pointer-events: none;
    z-index: 1;
}

/* Nodes */
.edge-label {
    position: absolute;
    left: 804px;
    top: 254px;
    font-size: 11px;
    color: #777;
    z-index: 2;
}

.node-chat {
    position: absolute;
    left: 619px;
    top: 231px;
    width: 82px;
    height: 82px;
    background-color: #fff;
    border: 1.5px solid #2da56d;
    border-radius: 32px 6px 6px 32px;
    outline: 7px solid #e5e7ee;
    display: flex;
    align-items: center;
    justify-content: center;
}

.chat-check {
    position: absolute;
    right: 5px;
    bottom: 5px;
}

.bolt {
    position: absolute;
    left: 592px;
    top: 265px;
}

.port-out {
    position: absolute;
    width: 13px;
    height: 13px;
    border-radius: 50%;
    background-color: #8e8e8e;
    top: 265.5px;
    z-index: 2;
}

.port-chat {
    left: 695px;
}

.port-agent {
    left: 1120px;
}

.port-in {
    position: absolute;
    left: 932px;
    top: 266px;
    width: 6px;
    height: 13px;
    background-color: #8e8e8e;
    z-index: 2;
}

.node-title {
    position: absolute;
    font-size: 13.7px;
    font-weight: 500;
    line-height: 17px;
    color: #3f3f46;
    text-align: center;
    width: 160px;
}

.title-chat {
    left: 580px;
    top: 319px;
}

.title-gem {
    left: 573px;
    top: 552px;
}

.title-cmem {
    left: 936px;
    top: 552px;
    width: 120px;
}

.title-weather {
    left: 1191px;
    top: 552px;
}

.title-news {
    left: 1287px;
    top: 552px;
}

.node-agent {
    position: absolute;
    left: 935px;
    top: 231px;
    width: 191px;
    height: 82px;
    background-color: #fff;
    border: 1.5px solid #e5192f;
    border-radius: 6px;
    outline: 7px solid #e5e7ee;
    display: flex;
    align-items: center;
    padding-left: 15px;
}

.agent-name {
    margin-left: 13px;
    width: 100px;
    font-size: 13.7px;
    font-weight: 500;
    line-height: 17px;
}

.err-badge {
    position: absolute;
    width: 13px;
    height: 13px;
    border-radius: 50%;
    background-color: #e5192f;
    color: #fff;
    font-size: 12px;
    font-weight: 700;
    line-height: 12px;
    text-align: center;
}

.err-agent {
    right: 5px;
    bottom: 5px;
}

.err-gemini {
    left: 27px;
    bottom: 5px;
}

.plus-box {
    position: absolute;
    width: 18px;
    height: 18px;
    background-color: #fff;
    border: 1.5px solid #8e8e8e;
    border-radius: 3px;
    font-size: 14px;
    line-height: 14px;
    text-align: center;
    color: #666;
    z-index: 2;
}

.plus-out {
    left: 1174px;
    top: 263px;
}

.plus-tool {
    left: 1083px;
    top: 361px;
    border-color: #7d7fb3;
}

.diamond {
    position: absolute;
    width: 11px;
    height: 11px;
    background-color: #7d7fb3;
    transform: rotate(45deg);
    z-index: 2;
}

.d-model {
    left: 963.5px;
    top: 307.5px;
}

.d-mem {
    left: 1045.5px;
    top: 307.5px;
}

.d-tool {
    left: 1086.5px;
    top: 307.5px;
}

.d-gem {
    left: 647.5px;
    top: 472.5px;
}

.d-cmem {
    left: 990.5px;
    top: 472.5px;
}

.d-weather {
    left: 1265.5px;
    top: 472.5px;
}

.d-news {
    left: 1361.5px;
    top: 472.5px;
}

.port-label {
    position: absolute;
    font-size: 10.2px;
    line-height: 12px;
    color: #8587ba;
    white-space: nowrap;
    transform: translateX(-50%);
    background-color: rgba(255, 255, 255, 0.6);
    z-index: 2;
}

.port-label i {
    font-style: normal;
    color: #e5192f;
}

.pl-model {
    left: 969px;
    top: 322px;
}

.pl-mem {
    left: 1051px;
    top: 322px;
}

.pl-tool {
    left: 1092px;
    top: 322px;
}

.pl-gem {
    left: 653px;
    top: 454px;
}

.pl-cmem {
    left: 996px;
    top: 454px;
}

.node-round {
    position: absolute;
    top: 478px;
    width: 68px;
    height: 68px;
    border-radius: 50%;
    background-color: #f0f0f6;
    border: 1.5px solid #c5c8d2;
    outline: 7px solid #e5e7ee;
    display: flex;
    align-items: center;
    justify-content: center;
}

.n-gemini {
    left: 619px;
    border-color: #e5192f;
    outline-color: #e5d3d7;
    padding-bottom: 6px;
}

.n-memory {
    left: 962px;
}

.n-weather {
    left: 1237px;
}

.n-news {
    left: 1333px;
}

.collapse {
    position: absolute;
    left: -11px;
    top: 390px;
    width: 22px;
    height: 22px;
    border: 1px solid #d9deea;
    border-radius: 50%;
    background-color: #fff;
    display: flex;
    align-items: center;
    justify-content: center;
}

/* Floating buttons */
.ctrl {
    width: 53px;
    height: 52px;
    background-color: #fff;
    border: 1px solid #a8adb8;
    border-radius: 5px;
    display: flex;
    align-items: center;
    justify-content: center;
}

.ctrl-right {
    position: absolute;
    right: 20px;
    top: 21px;
    display: flex;
    flex-direction: column;
    gap: 10.5px;
}

.ctrl-left {
    position: absolute;
    left: 20px;
    top: 743px;
    display: flex;
    gap: 14.5px;
}

.open-chat {
    position: absolute;
    left: 837px;
    top: 744px;
    width: 165px;
    height: 52px;
    border: none;
    border-radius: 4px;
    background-color: #ff6d5a;
    color: #fff;
    font-family: 'Inter', sans-serif;
    font-size: 17px;
    font-weight: 500;
    display: flex;
    align-items: center;
    justify-content: center;
    gap: 7px;
}

.cursor {
    position: absolute;
    left: 1664px;
    top: 278px;
}

/* Bottom panel */
.panel {
    height: 40px;
    flex-shrink: 0;
    display: flex;
    border-top: 1px solid #d9deea;
    font-size: 15px;
}

.panel-chat {
    width: 552px;
    border-right: 1px solid #d9deea;
    display: flex;
    align-items: center;
    padding: 0 20px;
}

.panel-title {
    font-weight: 500;
    color: #3f3f46;
}

.session {
    margin-left: auto;
    margin-right: 18px;
    color: #8d9199;
    font-weight: 500;
}

.panel-logs {
    flex: 1;
    display: flex;
    align-items: center;
    padding: 0 20px;
}

.clear {
    margin-left: auto;
    display: flex;
    align-items: center;
    gap: 4px;
    color: #8d9199;
    font-weight: 500;
}

.pop {
    margin: 0 20px 0 18px;
}

/* Windows taskbar */
.taskbar {
    height: 50px;
    display: flex;
    align-items: stretch;
    background: linear-gradient(90deg, #e3dabf 0%, #e2d6d0 25%, #dfd9d3 35%, #dee2da 45%, #e0d8d0 65%, #e2d6cf 72%, #d4d8da 85%, #c8d5e0 100%);
    font-family: 'Open Sans', sans-serif;
    color: #111;
}

.start {
    width: 61px;
    display: flex;
    align-items: center;
    justify-content: center;
}

.search {
    width: 359px;
    background-color: #fff;
    border: 1px solid #ccc;
    display: flex;
    align-items: center;
    padding-left: 14px;
}

.search-text {
    font-size: 18px;
    margin-left: 14px;
    letter-spacing: -0.1px;
}

.search-spark {
    margin-left: auto;
    margin-right: 10px;
}

.task-apps {
    display: flex;
    margin-left: -1px;
}

.app-cell {
    width: 62px;
    display: flex;
    align-items: center;
    justify-content: center;
    position: relative;
}

.app-task {
    width: 64px;
}

.app-on::after {
    content: "";
    position: absolute;
    bottom: 0;
    left: 6px;
    right: 6px;
    height: 3px;
    background-color: #0078d4;
}

.app-active {
    background-color: #f3eeec;
}

.app-active::after {
    left: 0;
    right: 0;
}

.tray {
    margin-left: auto;
    display: flex;
    align-items: center;
    padding-right: 32px;
}

.weather-icon {
    position: relative;
}

.weather-badge {
    position: absolute;
    top: -7px;
    right: 1px;
    width: 16px;
    height: 16px;
    border-radius: 50%;
    background-color: #c42b1c;
    color: #fff;
    font-size: 9px;
    font-weight: 700;
    line-height: 16px;
    text-align: center;
}

.temp {
    font-size: 16.5px;
    margin-left: 8px;
}

.cond {
    font-size: 17.5px;
    margin-left: 11px;
}

.tray-chev {
    margin-left: 29px;
}

.tray-batt {
    margin-left: 13px;
}

.tray-wifi {
    margin-left: 13px;
}

.tray-vol {
    margin-left: 10px;
}

.lang {
    font-size: 14.2px;
    margin-left: 11px;
}

.clock {
    margin-left: 18px;
    width: 76px;
    display: flex;
    flex-direction: column;
    align-items: center;
    font-size: 14.2px;
    line-height: 24px;
}

.notif {
    margin-left: 21px;
    position: relative;
}

.notif-count {
    position: absolute;
    right: -10px;
    bottom: -10px;
    width: 20px;
    height: 20px;
    border: 1px solid #777;
    border-radius: 50%;
    background-color: #d9dde0;
    font-size: 13px;
    font-weight: 600;
    line-height: 18px;
    text-align: center;
}
```
